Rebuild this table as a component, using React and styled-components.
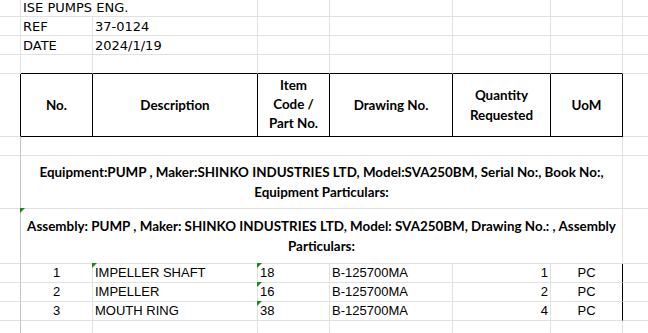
import React from 'react';
import styled, { createGlobalStyle } from 'styled-components';

const GlobalStyle = createGlobalStyle`
  html, body {
    margin: 0;
    padding: 0;
    background: #fff;
    overflow: hidden;
  }
`;

const GRID = '#e1e1e1';
const INK = '#000';
const FROZEN = '#c4c4c4';

const Sheet = styled.div`
  display: grid;
  grid-template-columns: 21px 72px 165px 72px 123px 98px 72px 25px;
  grid-template-rows: 17px 19px 19px 19px 63px 19px 53px 55px 19px 19px 19px 14px;
  width: 648px;
  height: 333px;
  overflow: hidden;
`;

const Cell = styled.div`
  box-sizing: border-box;
  position: relative;
  grid-column: span ${p => p.$span || 1};
  border-right: 1px solid ${p => p.$right || GRID};
  border-bottom: 1px solid ${p => p.$bottom || GRID};
  display: flex;
  align-items: ${p => p.$valign || 'flex-end'};
  justify-content: ${p => p.$align === 'center' ? 'center' : p.$align === 'right' ? 'flex-end' : 'flex-start'};
  padding: 0 2px 1px 2px;
  white-space: nowrap;
  color: ${INK};
`;

// column past the table, cut by the window edge
const Edge = styled(Cell)`
  border-right: none;
`;

const TopText = styled.span`
  font-family: "DejaVu Sans", sans-serif;
  font-size: 13px;
  line-height: 15px;
`;

const HeadText = styled.span`
  font-family: Lato, "Open Sans", sans-serif;
  font-weight: 700;
  font-size: 13.4px;
  line-height: ${p => p.$lh || 20}px;
  text-align: center;
`;

const DataText = styled.span`
  font-family: "Liberation Sans", Arial, sans-serif;
  font-size: 13px;
  line-height: 15px;
  padding-bottom: 1px;
`;

const Flag = styled.span`
  position: absolute;
  top: -1px;
  left: -1px;
  width: 0;
  height: 0;
  border-top: 5px solid #178a17;
  border-right: 5px solid transparent;
`;

const headers = [
  { text: ['No.'] },
  { text: ['Description'] },
  { text: ['Item', 'Code /', 'Part No.'], lh: 19 },
  { text: ['Drawing No.'] },
  { text: ['Quantity', 'Requested'] },
  { text: ['UoM'] },
];

const items = [
  { no: 1, desc: 'IMPELLER SHAFT', code: '18', dwg: 'B-125700MA', qty: 1, uom: 'PC', descFlag: true },
  { no: 2, desc: 'IMPELLER', code: '16', dwg: 'B-125700MA', qty: 2, uom: 'PC' },
  { no: 3, desc: 'MOUTH RING', code: '38', dwg: 'B-125700MA', qty: 4, uom: 'PC' },
];

const Lines = ({ lines, lh }) => (
  <HeadText $lh={lh}>
    {lines.map((l, i) => (
      <React.Fragment key={i}>
        {i > 0 && <br />}
        {l}
      </React.Fragment>
    ))}
  </HeadText>
);

const Blank = ({ n = 1, ...rest }) =>
  Array.from({ length: n }, (_, i) => <Cell key={i} {...rest} />);

export default function App() {
  return (
    <>
      <GlobalStyle />
      <Sheet>
        {/* row 1 */}
        <Cell />
        <Cell $span={2}><TopText>ISE PUMPS ENG.</TopText></Cell>
        <Blank n={4} />
        <Edge />

        {/* row 2 */}
        <Cell />
        <Cell><TopText>REF</TopText></Cell>
        <Cell><TopText>37-0124</TopText></Cell>
        <Blank n={4} />
        <Edge />

        {/* row 3 */}
        <Cell />
        <Cell><TopText>DATE</TopText></Cell>
        <Cell><TopText>2024/1/19</TopText></Cell>
        <Blank n={4} />
        <Edge />

        {/* row 4 */}
        <Cell />
        <Blank n={6} $bottom={INK} />
        <Edge />

        {/* header */}
        <Cell $right={INK} />
        {headers.map((h, i) => (
          <Cell key={i} $right={INK} $bottom={INK} $align="center" $valign="center">
            <Lines lines={h.text} lh={h.lh} />
          </Cell>
        ))}
        <Edge />

        {/* spacer row */}
        <Cell $right={FROZEN} />
        <Cell $span={6} />
        <Edge />

        {/* equipment */}
        <Cell $right={FROZEN} />
        <Cell $span={6} $align="center" $valign="center">
          <Lines lines={[
            'Equipment:PUMP , Maker:SHINKO INDUSTRIES LTD, Model:SVA250BM, Serial No:, Book No:,',
            'Equipment Particulars:',
          ]} />
        </Cell>
        <Edge />

        {/* assembly */}
        <Cell $right={FROZEN} />
        <Cell $span={6} $align="center" $valign="center">
          <Flag />
          <Lines lines={[
            'Assembly: PUMP , Maker: SHINKO INDUSTRIES LTD, Model: SVA250BM, Drawing No.: , Assembly',
            'Particulars:',
          ]} />
        </Cell>
        <Edge />

        {/* items */}
        {items.map(it => (
          <React.Fragment key={it.no}>
            <Cell $right={FROZEN} />
            <Cell $align="center"><DataText>{it.no}</DataText></Cell>
            <Cell>{it.descFlag && <Flag />}<DataText>{it.desc}</DataText></Cell>
            <Cell><Flag /><DataText>{it.code}</DataText></Cell>
            <Cell><DataText>{it.dwg}</DataText></Cell>
            <Cell $align="right"><DataText>{it.qty}</DataText></Cell>
            <Cell $align="center" $right={INK}><DataText>{it.uom}</DataText></Cell>
            <Edge />
          </React.Fragment>
        ))}

        {/* trailing row */}
        <Cell $right={FROZEN} />
        <Blank n={6} />
        <Edge />
      </Sheet>
    </>
  );
}
